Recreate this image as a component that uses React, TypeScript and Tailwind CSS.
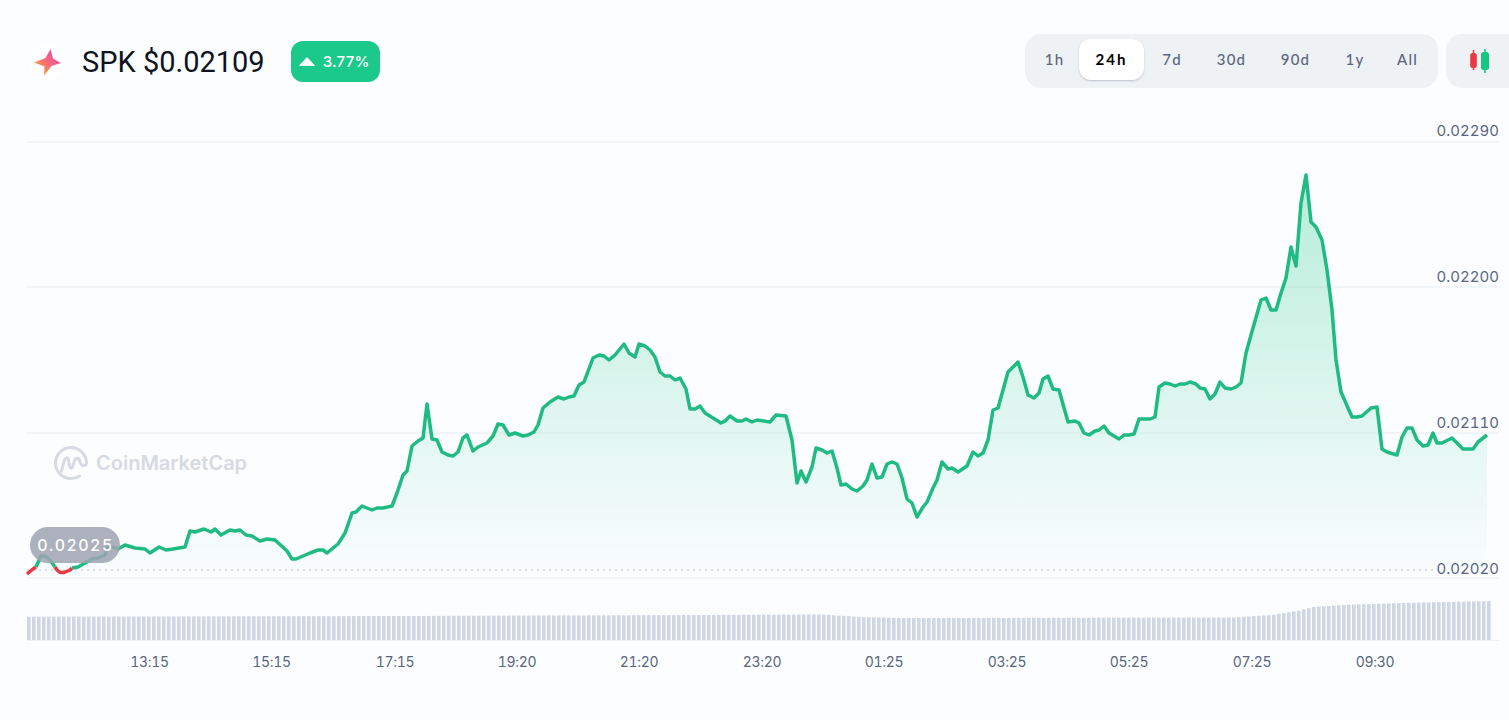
const green: [number, number][] = [
  [36, 567], [41, 556], [45, 556], [50, 560], [55, 567],
];
const red1: [number, number][] = [[27, 574], [33, 569], [36, 567]];
const red2: [number, number][] = [[55, 567], [57, 570], [60, 572.5], [64, 572.5], [70, 570], [72, 568]];

// traced from the reference, left to right
const price: [number, number][] = [
  [72, 568], [78, 567], [85, 563], [92, 559], [98, 558], [105, 555], [108, 547], [113, 547], [118, 549], [125, 545],
  [135, 548], [145, 549], [150, 553], [159, 547], [166, 550], [173, 549], [185, 547], [190, 531], [195, 532], [204, 529],
  [211, 532], [215, 529], [221, 535], [230, 530], [235, 531], [240, 530], [246, 535], [252, 536], [260, 541], [267, 539],
  [275, 540], [287, 551], [292, 559], [296, 559], [310, 553], [318, 550], [323, 550], [327, 553], [338, 544], [345, 533],
  [352, 513], [356, 512], [362, 506], [372, 510], [377, 508], [383, 508], [392, 506], [397, 493], [403, 475], [407, 471],
  [412, 446], [418, 441], [423, 438], [427, 404], [432, 439], [437, 440], [442, 452], [448, 455], [453, 456], [458, 452],
  [463, 438], [467, 435], [473, 451], [478, 447], [487, 443], [493, 436], [498, 424], [503, 425], [509, 435], [515, 433],
  [523, 436], [528, 435], [534, 432], [538, 425], [543, 408], [550, 402], [558, 397], [564, 399], [569, 397], [574, 396],
  [579, 385], [584, 382], [593, 358], [599, 355], [604, 356], [609, 360], [615, 355], [624, 344], [629, 353], [635, 357],
  [639, 344], [645, 346], [650, 350], [655, 357], [660, 372], [665, 376], [670, 376], [675, 380], [680, 378], [686, 389],
  [690, 409], [695, 409], [700, 406], [705, 413], [713, 418], [721, 423], [725, 421], [730, 416], [737, 421], [742, 421],
  [746, 419], [752, 422], [757, 420], [770, 422], [776, 415], [786, 416], [792, 440], [797, 483], [801, 471], [806, 482],
  [812, 467], [816, 448], [822, 450], [827, 453], [832, 451], [837, 468], [841, 485], [846, 484], [852, 489], [857, 491],
  [863, 486], [867, 480], [872, 464], [877, 478], [882, 477], [887, 464], [892, 462], [897, 464], [902, 478], [907, 499],
  [912, 503], [917, 517], [923, 507], [927, 502], [933, 488], [937, 480], [942, 462], [948, 469], [952, 468], [958, 472],
  [967, 466], [973, 452], [978, 456], [983, 453], [988, 440], [993, 410], [998, 408], [1008, 372], [1013, 367], [1018, 362],
  [1023, 377], [1028, 395], [1034, 398], [1039, 393], [1043, 379], [1048, 376], [1053, 389], [1059, 390], [1068, 422], [1075, 421],
  [1079, 423], [1084, 433], [1089, 435], [1095, 431], [1099, 430], [1104, 426], [1109, 433], [1119, 439], [1124, 435], [1129, 435],
  [1134, 434], [1139, 419], [1150, 419], [1155, 417], [1159, 387], [1165, 383], [1170, 384], [1175, 386], [1180, 384], [1185, 384],
  [1190, 382], [1196, 384], [1200, 388], [1205, 389], [1210, 399], [1215, 394], [1220, 382], [1225, 388], [1231, 389], [1236, 387],
  [1241, 383], [1246, 353], [1251, 335], [1261, 300], [1266, 298], [1271, 310], [1276, 310], [1281, 293], [1286, 278], [1291, 247],
  [1296, 266], [1301, 203], [1306, 175], [1311, 222], [1316, 227], [1322, 240], [1327, 270], [1332, 310], [1336, 360], [1341, 392],
  [1352, 417], [1357, 417], [1362, 416], [1371, 408], [1377, 407], [1382, 449], [1387, 452], [1397, 455], [1402, 437], [1407, 428],
  [1412, 428], [1417, 440], [1423, 446], [1428, 445], [1433, 433], [1437, 443], [1442, 443], [1452, 438], [1463, 449], [1473, 449],
  [1478, 442], [1487, 435],
];

const toPts = (p: [number, number][]) => p.map(([x, y]) => `${x},${y}`).join(" ");

const volumeTops: [number, number][] = [
  [27, 616.7], [400, 616], [700, 615], [820, 614.5], [860, 617], [900, 618], [1230, 617.5], [1270, 615], [1295, 611],
  [1312, 607], [1340, 605], [1400, 603], [1490, 601],
];
const volumeTop = (x: number) => {
  for (let i = 1; i < volumeTops.length; i++) {
    const [x0, y0] = volumeTops[i - 1];
    const [x1, y1] = volumeTops[i];
    if (x <= x1) return y0 + ((y1 - y0) * (x - x0)) / (x1 - x0);
  }
  return 601;
};
const bars = Array.from({ length: 293 }, (_, i) => 27 + i * 5);

const ranges = [
  { label: "1h", w: "w-[49px]" },
  { label: "24h", w: "w-[65px]", active: true },
  { label: "7d", w: "w-[56px]" },
  { label: "30d", w: "w-[63px]" },
  { label: "90d", w: "w-[65px]" },
  { label: "1y", w: "w-[54px]" },
  { label: "All", w: "w-[51px]" },
];

const gridLines = [142, 287, 433, 578];
const priceLabels = [
  { y: 136, t: "0.02290" },
  { y: 282, t: "0.02200" },
  { y: 428, t: "0.02110" },
  { y: 574, t: "0.02020" },
];
const times = [
  [149.5, "13:15"], [271.5, "15:15"], [395, "17:15"], [517, "19:20"], [639, "21:20"], [762, "23:20"],
  [884, "01:25"], [1007, "03:25"], [1129, "05:25"], [1252, "07:25"], [1375, "09:30"],
] as const;

function SparkLogo() {
  return (
    <div className="w-[36px] h-[36px] rounded-full bg-white shrink-0">
      <svg viewBox="29 44 36 36" className="w-[36px] h-[36px]">
        <defs>
          <linearGradient id="spark" gradientUnits="userSpaceOnUse" x1="37" y1="70" x2="58" y2="52">
            <stop offset="0" stopColor="#fba92f" />
            <stop offset="0.45" stopColor="#f8697a" />
            <stop offset="1" stopColor="#e04dae" />
          </linearGradient>
        </defs>
        <path d="M50.5 49 L53 58.5 L61 63 L51.5 66 L44 75.5 L44.5 66.5 L34 62.5 L45.5 58 Z" fill="url(#spark)" />
      </svg>
    </div>
  );
}

function CandleIcon() {
  return (
    <svg viewBox="1466 46 28 30" className="w-[28px] h-[30px]">
      <path d="M1473.5 50V70" stroke="#ea3943" strokeWidth="1.6" />
      <rect x="1470.2" y="53" width="6.6" height="15" rx="2.5" fill="#ea3943" />
      <path d="M1485 49V73" stroke="#16c784" strokeWidth="1.6" />
      <rect x="1481" y="52" width="8" height="18" rx="2.5" fill="#16c784" />
    </svg>
  );
}

function Header() {
  return (
    <div className="flex items-center justify-between h-[100px] pl-[29px] pt-[24px]">
      <div className="flex items-center">
        <SparkLogo />
        <span className="ml-[17px] pt-[2px] text-[29px] text-[#0d1421] font-['Roboto',sans-serif]">SPK $0.02109</span>
        <div className="ml-[26px] mb-[1px] w-[89px] h-[41px] rounded-[12px] bg-[#1bc98a] flex items-center pl-[8px] gap-[8px]">
          <svg viewBox="0 0 16 9" className="w-[16px] h-[9px]">
            <path d="M8 0.6 L15.4 8.4 H0.6 Z" fill="#fff" stroke="#fff" strokeWidth="1" strokeLinejoin="round" />
          </svg>
          <span className="pt-[1px] text-white text-[15px] font-medium tracking-[0.3px] font-['Inter',sans-serif]">3.77%</span>
        </div>
      </div>
      <div className="flex items-center gap-[8px] w-[484px] shrink-0 overflow-hidden mb-[2px]">
        <div className="flex items-center h-[54px] w-[413px] shrink-0 pl-[5px] rounded-[16px] bg-[#eff2f5] font-['Lato',sans-serif] text-[15px] tracking-[1.2px]">
          {ranges.map((r) => (
            <div
              key={r.label}
              className={
                r.active
                  ? `${r.w} h-[41px] mb-[3px] flex items-center justify-center rounded-[12px] bg-white text-black font-bold tracking-[2px] shadow-[0_1px_2px_rgba(88,102,126,0.35)]`
                  : `${r.w} h-[41px] mb-[3px] flex items-center justify-center text-[#58667e] font-medium`
              }
            >
              {r.label}
            </div>
          ))}
        </div>
        <div className="w-[80px] h-[54px] shrink-0 rounded-[16px] bg-[#eff2f5] flex items-center pl-[20px]">
          <CandleIcon />
        </div>
      </div>
    </div>
  );
}

function Chart() {
  const area = `27,570 ${toPts([...red1, ...green, ...red2.slice(1), ...price.slice(1)])} 1487,570`;
  return (
    <svg viewBox="0 100 1509 620" className="block w-[1509px] h-[620px] tabular-nums font-['Inter',sans-serif]">
      <defs>
        <linearGradient id="fill" gradientUnits="userSpaceOnUse" x1="0" y1="175" x2="0" y2="570">
          <stop offset="0" stopColor="#16c784" stopOpacity="0.3" />
          <stop offset="1" stopColor="#16c784" stopOpacity="0.01" />
        </linearGradient>
      </defs>

      {gridLines.map((y) => (
        <line key={y} x1="27" x2="1499" y1={y} y2={y} stroke="#eff2f5" strokeWidth="1.5" />
      ))}

      <polygon points={area} fill="url(#fill)" />
      <line x1="27" x2="1440" y1="570" y2="570" stroke="#cfd6e4" strokeWidth="1.5" strokeDasharray="2 4" />

      {/* watermark */}
      <path
        d="M79.5 476 A15.5 15.5 0 1 1 86.5 463 C85.5 467 81.5 466.5 80 462 C79 458 76 456.5 74.5 461 L72.5 467 C71.5 469 70 468.5 69.5 466 L68.5 460 C68 457 65.5 457.5 64.5 460 L61.5 471"
        fill="none"
        stroke="#d6dae2"
        strokeWidth="3"
        strokeLinecap="round"
        strokeLinejoin="round"
      />
      <text x="96" y="470" fontSize="20" fontWeight="600" fill="#d6dae2">
        CoinMarketCap
      </text>

      {bars.map((x) => (
        <rect key={x} x={x} y={volumeTop(x)} width="3.6" height={640 - volumeTop(x)} fill="#cfd6e4" />
      ))}
      <line x1="27" x2="1499" y1="640.5" y2="640.5" stroke="#eff2f5" />

      <polyline points={toPts(red1)} fill="none" stroke="#ea3943" strokeWidth="3.5" strokeLinejoin="round" />
      <polyline points={toPts(red2)} fill="none" stroke="#ea3943" strokeWidth="3.5" strokeLinejoin="round" />
      <polyline points={toPts(green)} fill="none" stroke="#1fbb82" strokeWidth="3.5" strokeLinejoin="round" />
      <polyline points={toPts(price)} fill="none" stroke="#1fbb82" strokeWidth="3.5" strokeLinejoin="round" />

      <rect x="30" y="527" width="90" height="36" rx="18" fill="#9ea3b2" fillOpacity="0.85" />
      <text x="75.5" y="551" textAnchor="middle" fontSize="16" fontWeight="500" letterSpacing="1.4" fill="#fff">
        0.02025
      </text>

      {priceLabels.map((l) => (
        <text key={l.t} x="1499" y={l.y} textAnchor="end" fontSize="15" fill="#58667e">
          {l.t}
        </text>
      ))}
      {times.map(([x, t]) => (
        <text key={t} x={x} y="667" textAnchor="middle" fontSize="14" letterSpacing="-0.3" fill="#58667e">
          {t}
        </text>
      ))}
    </svg>
  );
}

export default function App() {
  return (
    <div className="w-[1509px] h-[720px] overflow-hidden bg-[#fcfdff]">
      <Header />
      <Chart />
    </div>
  );
}
